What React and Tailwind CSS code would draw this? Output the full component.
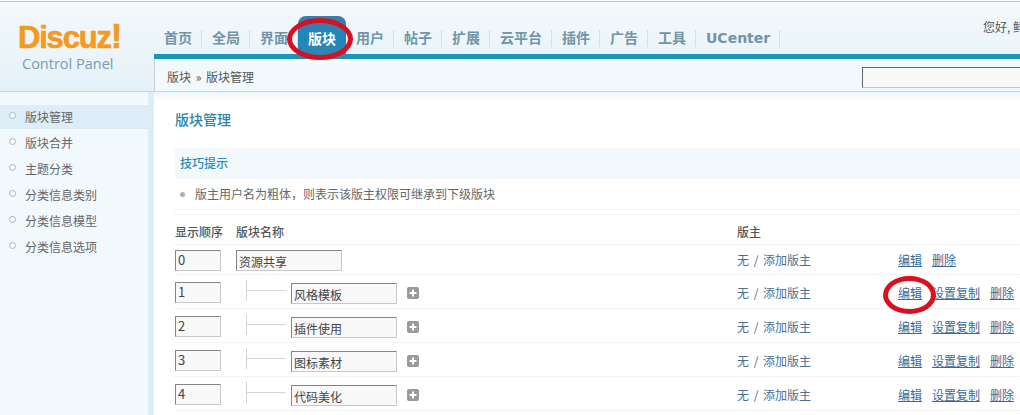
const tabs = ["首页", "全局", "界面", "版块", "用户", "帖子", "扩展", "云平台", "插件", "广告", "工具", "UCenter"];
const menu = ["版块管理", "版块合并", "主题分类", "分类信息类别", "分类信息模型", "分类信息选项"];
const rows = [
  ["1", "风格模板"],
  ["2", "插件使用"],
  ["3", "图标素材"],
  ["4", "代码美化"],
];

function Field({ value, className, digit }) {
  return (
    <div className={`h-[21px] border border-t-[#858585] border-l-[#858585] border-r-[#c8c8c8] border-b-[#c8c8c8] bg-[#f8f8f8] pl-[2px] ${digit ? "text-[13px] leading-[18px]" : "text-[12px] leading-[21px]"} text-[#444] ${className}`}>
      {value}
    </div>
  );
}

function Plus() {
  return (
    <div className="flex w-[340px] items-center pl-[10px]">
      <svg width="12" height="12" viewBox="0 0 12 12">
        <rect width="12" height="12" rx="2" fill="#9a9a9a" />
        <path d="M6 2.5v7M2.5 6h7" stroke="#fff" strokeWidth="2" />
      </svg>
    </div>
  );
}

function Moderator() {
  return <div className="w-[161px] text-[#4a6f8f] [word-spacing:2px]">无 / 添加版主</div>;
}

function Link({ children, className = "" }) {
  return <span className={`text-[#3a6a96] underline ${className}`}>{children}</span>;
}

export default function App() {
  return (
    <div className="relative h-[415px] w-[1020px] overflow-hidden bg-white pt-[1px] text-[12px] leading-[16px] text-[#666] [font-family:'Noto_Sans_CJK_SC','Liberation_Sans',sans-serif]">
      <header className="flex h-[91px] border-t border-b border-[#bcc6cc] border-b-[#c6d3d9] bg-gradient-to-b from-[#f4f9fc] to-[#e4f1f8]">
        <div className="w-[154px] shrink-0 pl-[18px] pt-[15px]">
          <div className="h-[38px] text-[31px] font-bold leading-[38px] tracking-[-1.2px] text-[#f59a1d] [-webkit-text-stroke:0.6px_#f59a1d] [font-family:'Liberation_Sans',sans-serif]">
            Discuz<span className="text-[35px]">!</span>
          </div>
          <div className="pl-[4px] text-[14.5px] leading-[18px] text-[#7c9bb0] [font-family:'Open_Sans',sans-serif]">Control Panel</div>
        </div>
        <div className="flex min-w-0 flex-1 flex-col">
          <div className="flex h-[52px] pt-[14px]">
            {tabs.map((tab) => tab === "版块" ? (
              <div key={tab} className="relative z-10 mb-[-5px] w-[48px] shrink-0 rounded-t-lg bg-gradient-to-b from-[#3d7ca9] via-[#1b87bc] to-[#3584ad] pt-[12px] text-center text-[14px] font-bold leading-[20px] text-white">
                {tab}
              </div>
            ) : (
              <div key={tab} className="mt-[14px] h-[17px] shrink-0 border-r border-[#d3e2ea] pl-[10px] pr-[9px] text-[14px] font-bold leading-[16px] text-[#6f95a8] [font-family:'DejaVu_Sans','Noto_Sans_CJK_SC',sans-serif]">
                {tab}
              </div>
            ))}
            <div className="ml-auto mt-[3px] w-[37px] shrink-0 overflow-hidden whitespace-nowrap text-[#555]">您好, 鲜花</div>
          </div>
          <div className="h-[5px] bg-[#1896bd]" />
          <div className="h-[4px] border-l border-[#c6d3d9] bg-[#fafdfe]" />
          <div className="flex flex-1 items-center justify-between border-l border-[#c6d3d9] bg-[#f2f9fd] pl-[12px] text-[#555]">
            <span className="[word-spacing:2px]">版块 » 版块管理</span>
            <div className="h-[21px] w-[158px] border border-t-[#666] border-l-[#666] border-r-0 border-b-[#c4c4c4] bg-[#f9f9f9]" />
          </div>
        </div>
      </header>

      <div className="flex h-[323px]">
        <aside className="w-[154px] shrink-0 border-r-[6px] border-[#dcedf6] bg-[#f2f9fd] pt-[13px]">
          {menu.map((item, i) => (
            <div key={item} className={`mb-[2px] flex h-[24px] items-center pl-[9px] ${i === 0 ? "bg-[#dcedf7]" : ""}`}>
              <span className="mb-[3px] mr-[9px] h-[7px] w-[7px] rounded-full border border-[#a9b4ba] bg-[#f8fcfe]" />
              <span className="text-[#666]">{item}</span>
            </div>
          ))}
        </aside>

        <main className="min-w-0 flex-1 bg-gradient-to-b from-[#eef6fa] from-0% to-white to-[3%] pl-[21px]">
          <h1 className="pt-[17px] text-[14px] font-medium leading-[20px] text-[#2a87a9]">版块管理</h1>
          <div className="mt-[19px] flex h-[31px] items-center bg-[#f2f8fc] pb-[2px] pl-[5px] font-medium text-[#2b8fb0]">技巧提示</div>
          <div className="flex h-[31px] items-center border-b border-dotted border-[#e8eff3] pl-[5px] text-[#666]">
            <span className="mr-[10px] h-[5px] w-[5px] rounded-full bg-[#a8b4ba]" />
            版主用户名为粗体，则表示该版主权限可继承到下级版块
          </div>
          <div className="mt-[4px] flex h-[31px] items-center border-y border-dotted border-[#e2ebf0] pt-[4px] font-medium text-[#555]">
            <div className="w-[61px]">显示顺序</div>
            <div className="w-[501px]">版块名称</div>
            <div>版主</div>
          </div>
          <div className="flex h-[30px] items-center border-b border-dotted border-[#e2ebf0] pt-[1px]">
            <Field value="0" digit className="mr-[15px] w-[46px]" />
            <Field value="资源共享" className="w-[106px]" />
            <div className="ml-[395px]"><Moderator /></div>
            <Link className="mr-[10px]">编辑</Link>
            <Link>删除</Link>
          </div>
          {rows.map(([order, name]) => (
            <div key={order} className="flex h-[34px] items-center border-b border-dotted border-[#e2ebf0] pt-[2px]">
              <Field value={order} digit className="mr-[25px] w-[46px]" />
              <div className="mr-[5px] -mt-[4px] h-[21px] w-[40px] border-l border-[#d0d6d9]">
                <div className="mt-[10px] h-px bg-[#d0d6d9]" />
              </div>
              <Field value={name} className="mt-[2px] w-[106px]" />
              <Plus />
              <Moderator />
              <Link className="mr-[10px]">编辑</Link>
              <Link className="mr-[10px]">设置复制</Link>
              <Link>删除</Link>
            </div>
          ))}
        </main>
      </div>

      <div className="absolute left-[287px] top-[18px] z-20 h-[42px] w-[66px] rounded-[50%] border-[5px] border-[#d8101f]" />
      <div className="absolute left-[883px] top-[276px] z-20 h-[38px] w-[53px] rounded-[50%] border-[5px] border-[#d8101f]" />
    </div>
  );
}
